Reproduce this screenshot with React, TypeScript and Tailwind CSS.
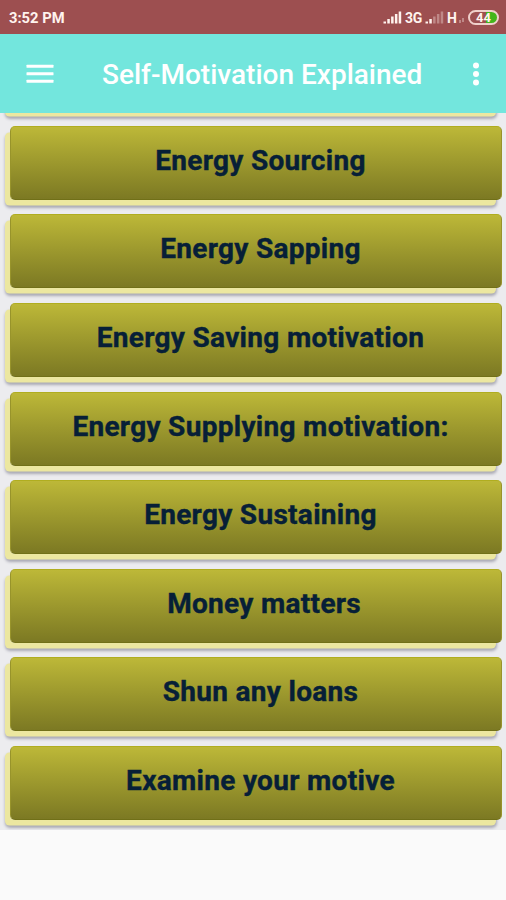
import React from 'react';

const topics = [
  '',
  'Energy Sourcing',
  'Energy Sapping',
  'Energy Saving motivation',
  'Energy Supplying motivation:',
  'Energy Sustaining',
  ' Money matters',
  'Shun any loans',
  'Examine your motive',
];

const Signal = ({ active }: { active: number }) => (
  <svg width="19" height="13" viewBox="0 0 19 13" fill="#fff3ee">
    {[2, 4.5, 7, 9.5, 12].map((h, i) => (
      <rect key={h} x={0.5 + i * 3.8} y={12.5 - h} width="2.5" height={h} opacity={i < active ? 1 : 0.35} />
    ))}
  </svg>
);

const StatusBar = () => (
  <div className="flex h-[34px] items-center bg-[#9d4f50] pl-[9px] pr-[7px] pt-px text-[#fff3ee]">
    <span className="pt-px text-[14.75px] font-bold leading-none">3:52 PM</span>
    <div className="ml-auto flex h-4 items-center">
      <Signal active={5} />
      <span className="ml-[3px] w-[17px] text-[14px] font-bold leading-none tracking-tight">3G</span>
      <span className="ml-[3px]">
        <Signal active={2} />
      </span>
      <span className="ml-[3px] w-[10px] text-[14px] font-bold leading-none">H</span>
      <svg className="ml-0.5 mt-1" width="6" height="8" viewBox="0 0 6 8" fill="#fff3ee" opacity="0.35">
        <rect x="0" y="4" width="2" height="3" />
        <rect x="3" y="2" width="2" height="4" />
      </svg>
      <div className="ml-[3px] flex h-[15px] w-[31px] items-center justify-center rounded-full border-2 border-[#f0d0cb] bg-[linear-gradient(to_right,#9d4f50_58%,#43b51b_58%)] text-[13px] font-bold leading-none">
        44
      </div>
    </div>
  </div>
);

const AppBar = () => (
  <header className="flex h-[79px] items-center bg-[#73e6dd] pl-[26px] pr-[26px] text-white">
    <svg width="28" height="20" viewBox="0 0 28 20" fill="currentColor">
      <rect x="0.5" y="0.7" width="27" height="3" rx="0.5" />
      <rect x="0.5" y="8.2" width="27" height="3" rx="0.5" />
      <rect x="0.5" y="15.7" width="27" height="3" rx="0.5" />
    </svg>
    <h1 className="ml-[48px] whitespace-nowrap pt-0.5 text-[28px] font-medium leading-8">Self-Motivation Explained</h1>
    <svg className="ml-auto" width="8" height="24" viewBox="0 0 8 24" fill="currentColor">
      <circle cx="4" cy="3.5" r="3" />
      <circle cx="4" cy="12" r="3" />
      <circle cx="4" cy="20.5" r="3" />
    </svg>
  </header>
);

const TopicButton = ({ label }: { label: string }) => (
  <button className="ml-[10px] block h-[74px] w-[492px] shrink-0 whitespace-pre rounded-[5px] border border-x-[#98942b] border-b-[#717018] border-t-[#b0ad20] bg-linear-to-b from-[#bdb838] to-[#7c7923] pb-1 pl-[9px] text-center text-[28px] font-bold leading-8 tracking-[0.3px] text-[#071f37] [-webkit-text-stroke:0.4px_#071f37] shadow-[-5.5px_6px_0_-0.5px_#ece7a0,-5px_8px_3px_0_#a9a9b4]">
    {label}
  </button>
);

const App = () => {
  return (
    <div className="h-[900px] w-[506px] overflow-hidden bg-[#fafafa] font-['Roboto','Liberation_Sans',sans-serif]">
      <StatusBar />
      <AppBar />
      <main className="h-[717px] overflow-hidden bg-[#ececef]">
        <div className="-mt-[76px] flex flex-col gap-[14.65px]">
          {topics.map((topic) => (
            <TopicButton key={topic} label={topic} />
          ))}
        </div>
      </main>
    </div>
  );
};

export default App;
